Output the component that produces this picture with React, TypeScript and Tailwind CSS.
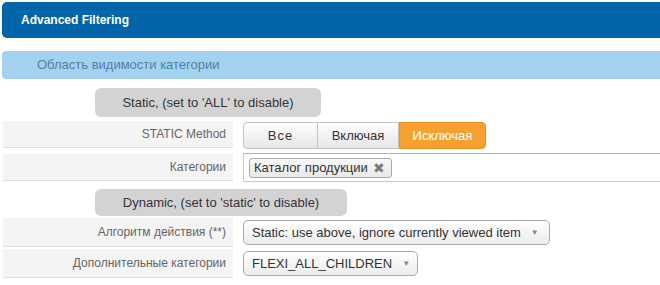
import React from "react";

const Label = ({ text, tall }: { text: string; tall?: boolean }) => (
  <div
    className={`ml-[1px] w-[230px] ${tall ? "h-[29px]" : "h-[27px]"} shrink-0 bg-[#f4f4f4] border-b border-[#dedede] flex items-center justify-end pr-[7px] text-[12px] text-[#666]`}
  >
    {text}
  </div>
);

const Caret = () => <span className="text-[8px] text-[#888] ml-[10px]">▼</span>;

export default function App() {
  return (
    <div
      className="w-[660px] h-[285px] overflow-hidden bg-white pl-[2px] pt-[2px] flex flex-col"
      style={{ fontFamily: '"Liberation Sans", Arial, sans-serif' }}
    >
      <div className="h-[36px] shrink-0 rounded-l-[5px] bg-[#0264a9] flex items-center pl-[19px] text-white font-bold text-[12px]">
        Advanced Filtering
      </div>

      <div className="mt-[13px] h-[28px] shrink-0 rounded-l-[4px] bg-[#a3d2f0] flex items-center pl-[35px] text-[13px] text-[#527fa8]">
        Область видимости категории
      </div>

      <div className="mt-[9px] ml-[93px] w-[226px] h-[29px] shrink-0 rounded-[6px] bg-[#d3d3d3] flex items-center justify-center text-[13px] text-[#333]">
        Static, (set to 'ALL' to disable)
      </div>

      <div className="mt-[4px] flex items-start">
        <Label text="STATIC Method" />
        <div className="ml-[10px] mt-[1px] flex h-[27px] text-[13px] text-[#333]">
          <div className="w-[75px] flex items-center justify-center rounded-l-[4px] border border-[#c4c4c4] bg-gradient-to-b from-white to-[#e6e6e6] tracking-[1px]">
            Все
          </div>
          <div className="w-[81px] flex items-center justify-center border-y border-r border-[#c4c4c4] bg-gradient-to-b from-white to-[#e6e6e6]">
            Включая
          </div>
          <div className="w-[87px] flex items-center justify-center rounded-r-[4px] bg-[#f6a12e] border border-[#e8932a] text-white">
            Исключая
          </div>
        </div>
      </div>

      <div className="mt-[4px] flex items-start">
        <div className="mt-[1px]">
          <Label text="Категории" />
        </div>
        <div className="ml-[10px] flex-1 h-[29px] border border-[#c8c8c8] border-t-[#b0b0b0] border-r-0 bg-white flex items-center pl-[5px]">
          <div className="h-[20px] flex items-center rounded-[3px] border border-[#aaa] bg-gradient-to-b from-[#f8f8f8] to-[#e9e9e9] pl-[4px] pr-[6px] text-[13px] text-[#333]">
            Каталог продукции
            <span className="ml-[5px] text-[14px] leading-none text-[#7a7a7a]">✖</span>
          </div>
        </div>
      </div>

      <div className="mt-[7px] ml-[93px] w-[252px] h-[27px] shrink-0 rounded-[6px] bg-[#d3d3d3] flex items-center justify-center text-[13px] text-[#333]">
        Dynamic, (set to 'static' to disable)
      </div>

      <div className="mt-[2px] flex items-center">
        <Label text="Алгоритм действия (**)" tall />
        <div className="ml-[10px] h-[25px] w-[307px] rounded-[5px] border border-[#aaa] bg-gradient-to-b from-white to-[#ececec] flex items-center pl-[8px] text-[13px] text-[#333]">
          Static: use above, ignore currently viewed item
          <Caret />
        </div>
      </div>

      <div className="mt-[2px] flex items-center">
        <Label text="Дополнительные категории" tall />
        <div className="ml-[10px] h-[25px] w-[175px] rounded-[5px] border border-[#aaa] bg-gradient-to-b from-white to-[#ececec] flex items-center pl-[8px] text-[13px] text-[#333]">
          FLEXI_ALL_CHILDREN
          <Caret />
        </div>
      </div>
    </div>
  );
}
